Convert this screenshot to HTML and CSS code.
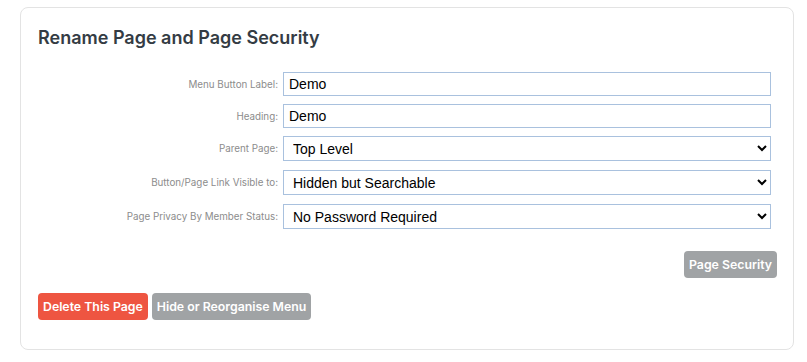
FILE: index.html
```html
<!DOCTYPE html>
<html lang="en">
<head>
    <meta charset="UTF-8">
    <meta name="viewport" content="width=device-width, initial-scale=1.0">
    <link rel="stylesheet" href="styles.css">
    <title>Rename Page and Page Security</title>
</head>
<body>
    <!-- cartao principal -->
    <main class="card">
        <h2 class="card-title">Rename Page and Page Security</h2>
        <form class="page-form">
            <div class="row">
                <label for="menu-label">Menu Button Label:</label>
                <input type="text" id="menu-label" class="field" value="Demo">
            </div>
            <div class="row">
                <label for="heading">Heading:</label>
                <input type="text" id="heading" class="field" value="Demo">
            </div>
            <div class="row">
                <label for="parent">Parent Page:</label>
                <select id="parent" class="field select">
                    <option>Top Level</option>
                </select>
            </div>
            <div class="row">
                <label for="visible">Button/Page Link Visible to:</label>
                <select id="visible" class="field select">
                    <option>Hidden but Searchable</option>
                </select>
            </div>
            <div class="row">
                <label for="privacy">Page Privacy By Member Status:</label>
                <select id="privacy" class="field select">
                    <option>No Password Required</option>
                </select>
            </div>
        </form>
        <div class="security-bar">
            <button class="button grey" type="button">Page Security</button>
        </div>
        <div class="actions">
            <button class="button red" type="button">Delete This Page</button>
            <button class="button grey" type="button">Hide or Reorganise Menu</button>
        </div>
    </main>
</body>
</html>
```

FILE: styles.css
```css
:root {
    --title-color: #343c44;
    --label-color: #8c8c8c;
    --field-border: #a9c1de;
    --card-border: #e3e3e3;
    --bg-grey: #a0a3a5;
    --bg-red: #ee5541;
}
body {
    margin: 0;
    background-color: #fff;
    font-family: Inter, "Noto Sans", sans-serif;
}
.card {
    margin: 7px 13px 0 20px;
    height: 343px;
    box-sizing: border-box;
    border: 1px solid var(--card-border);
    border-radius: 8px;
    padding: 0 16px 0 17px;
}
.card-title {
    margin: 19px 0 0 0;
    font-size: 18px;
    font-weight: 600;
    color: var(--title-color);
    line-height: 22px;
}
.page-form {
    margin-top: 23px;
    width: 733px;
}
.row {
    display: flex;
    align-items: center;
    margin-bottom: 8px;
}
.row label {
    width: 240px;
    text-align: right;
    padding-right: 5px;
    font-size: 9.8px;
    color: var(--label-color);
}
.field {
    flex: 1;
    height: 24px;
    box-sizing: border-box;
    border: 1px solid var(--field-border);
    border-radius: 0;
    padding: 0 5px;
    font-family: "Liberation Sans", Arial, sans-serif;
    font-size: 14px;
    color: #000;
    background-color: #fff;
    outline: none;
}
.select {
    height: 25px;
    padding-left: 5px;
}
.row:nth-child(3),
.row:nth-child(4) {
    margin-bottom: 9px;
}
.security-bar {
    display: flex;
    justify-content: flex-end;
    margin-top: 22px;
}
.actions {
    display: flex;
    gap: 4px;
    margin-top: 15px;
}
.button {
    border: none;
    border-radius: 4px;
    color: #fff;
    font-family: Inter, "Noto Sans", sans-serif;
    font-size: 12.3px;
    font-weight: 600;
    height: 27px;
    padding: 0 5px;
    cursor: pointer;
}
.grey {
    background-color: var(--bg-grey);
}
.red {
    background-color: var(--bg-red);
}
```
